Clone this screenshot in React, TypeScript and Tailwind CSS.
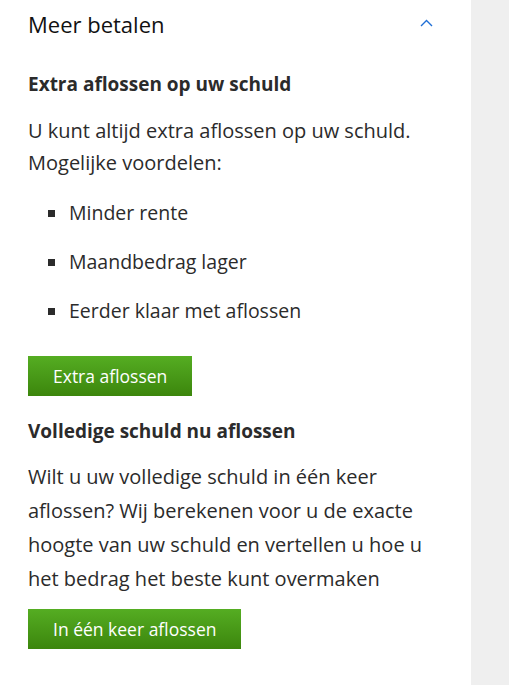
import React from 'react';

// Accordion panel: "Meer betalen"

function ChevronUp() {
  return (
    <svg width="13" height="8" viewBox="0 0 13 8" fill="none" className="-mt-[3px]">
      <path d="M1 7 L6.5 1.5 L12 7" stroke="#1f6fd6" strokeWidth="1.4" />
    </svg>
  );
}

const bullets = ['Minder rente', 'Maandbedrag lager', 'Eerder klaar met aflossen'];

function GreenButton({ children }: { children: React.ReactNode }) {
  return (
    <button className="h-10 px-[25px] text-[17.5px] text-white bg-gradient-to-b from-[#55ad22] to-[#3c860c]">
      {children}
    </button>
  );
}

export default function App() {
  return (
    <div
      className="flex min-h-[685px] bg-[#efefef] text-[#2b2b2b]"
      style={{ fontFamily: '"Open Sans", "Noto Sans", sans-serif' }}
    >
      <div className="w-[471px] bg-white pl-[28px] pr-[38px]">
        <div className="flex items-center justify-between h-[48px]">
          <h2 className="text-[22px] leading-[30px] text-[#111]">Meer betalen</h2>
          <ChevronUp />
        </div>

        <h3 className="mt-[24px] text-[19px] font-bold leading-[24px]">Extra aflossen op uw schuld</h3>
        <p className="mt-[19px] text-[20px] leading-[32px]">
          U kunt altijd extra aflossen op uw schuld.
          <br />
          Mogelijke voordelen:
        </p>
        <ul className="mt-[18px] flex flex-col gap-[17px] pl-[20px]">
          {bullets.map((b) => (
            <li key={b} className="flex items-center gap-[14px] text-[19.5px] leading-[32px]">
              <span className="w-[7px] h-[7px] bg-[#2b2b2b]" />
              {b}
            </li>
          ))}
        </ul>

        <div className="mt-[29px] flex">
          <GreenButton>Extra aflossen</GreenButton>
        </div>

        <h3 className="mt-[23px] text-[19px] font-bold leading-[24px]">Volledige schuld nu aflossen</h3>
        <p className="mt-[17px] text-[20px] leading-[34px]">
          Wilt u uw volledige schuld in één keer aflossen? Wij berekenen voor u de exacte hoogte van
          uw schuld en vertellen u hoe u het bedrag het beste kunt overmaken
        </p>
        <div className="mt-[13px] flex">
          <GreenButton>In één keer aflossen</GreenButton>
        </div>
      </div>
    </div>
  );
}
